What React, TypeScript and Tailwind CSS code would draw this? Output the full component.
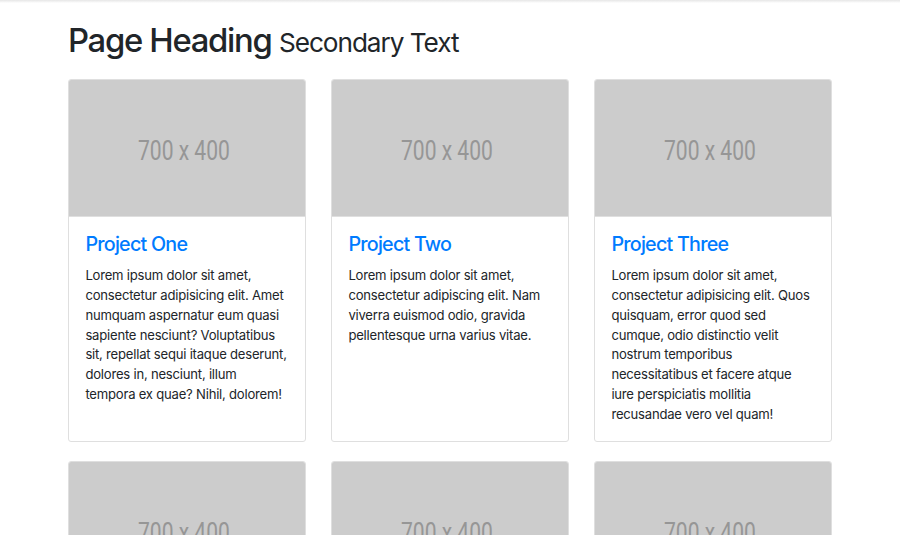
import React from "react";

type Project = { title: string; lines: string[] };

const projects: Project[] = [
  {
    title: "Project One",
    lines: [
      "Lorem ipsum dolor sit amet,",
      "consectetur adipisicing elit. Amet",
      "numquam aspernatur eum quasi",
      "sapiente nesciunt? Voluptatibus",
      "sit, repellat sequi itaque deserunt,",
      "dolores in, nesciunt, illum",
      "tempora ex quae? Nihil, dolorem!",
    ],
  },
  {
    title: "Project Two",
    lines: [
      "Lorem ipsum dolor sit amet,",
      "consectetur adipiscing elit. Nam",
      "viverra euismod odio, gravida",
      "pellentesque urna varius vitae.",
    ],
  },
  {
    title: "Project Three",
    lines: [
      "Lorem ipsum dolor sit amet,",
      "consectetur adipisicing elit. Quos",
      "quisquam, error quod sed",
      "cumque, odio distinctio velit",
      "nostrum temporibus",
      "necessitatibus et facere atque",
      "iure perspiciatis mollitia",
      "recusandae vero vel quam!",
    ],
  },
  {
    title: "Project Four",
    lines: [
      "Lorem ipsum dolor sit amet,",
      "consectetur adipiscing elit. Nam",
      "viverra euismod odio, gravida",
      "pellentesque urna varius vitae.",
    ],
  },
  {
    title: "Project Five",
    lines: [
      "Lorem ipsum dolor sit amet,",
      "consectetur adipiscing elit. Nam",
      "viverra euismod odio, gravida",
      "pellentesque urna varius vitae.",
    ],
  },
  {
    title: "Project Six",
    lines: [
      "Lorem ipsum dolor sit amet,",
      "consectetur adipisicing elit. Itaque",
      "earum nostrum suscipit ducimus",
      "nihil provident, perferendis rem",
      "illo, voluptate atque, sit eius in",
      "voluptates, nemo repellat fugiat",
      "excepturi! Nemo, esse.",
    ],
  },
];

function Card({ p }: { p: Project }) {
  return (
    <div className="flex flex-col rounded-[3px] border border-[#dfdfdf] bg-white overflow-hidden">
      <div className="h-[135.5px] bg-[#cccccc] flex items-center justify-center pr-[7px] pt-[7px]">
        <span
          className="text-[27px] font-normal text-[#969696] leading-none scale-x-[0.78] whitespace-nowrap"
          style={{ fontFamily: "Roboto, 'Liberation Sans', sans-serif" }}
        >
          700 x 400
        </span>
      </div>
      <div className="flex-1 px-[16.4px] pt-[16.4px] pb-[16.4px] border-t border-[#dfdfdf]">
        <h4 className="text-[19.7px] leading-[1.2] font-medium text-[#007bff] mb-[9.8px] tracking-[-0.75px]">
          {p.title}
        </h4>
        <p className="text-[13.1px] leading-[19.75px] text-[#212529] tracking-[-0.22px]">
          {p.lines.map((l, i) => (
            <span key={i} className="block whitespace-nowrap">
              {l}
            </span>
          ))}
        </p>
      </div>
    </div>
  );
}

export default function App() {
  return (
    <div
      className="min-h-[535px] bg-white"
      style={{ fontFamily: "Inter, 'Liberation Sans', sans-serif" }}
    >
      <div className="h-[3px] bg-gradient-to-b from-[#e6e6e6] to-white" />
      <div className="ml-[68px] w-[764px]">
        <h1 className="mt-[18px] mb-[18.7px] text-[32.8px] leading-[1.2] font-medium text-[#212529] tracking-[-1.3px]">
          Page Heading <small className="text-[26.2px] font-normal tracking-[-1.05px]">Secondary Text</small>
        </h1>
        <div className="grid grid-cols-3 gap-x-[25px] gap-y-[19.7px]">
          {projects.map((p) => (
            <Card key={p.title} p={p} />
          ))}
        </div>
      </div>
    </div>
  );
}
